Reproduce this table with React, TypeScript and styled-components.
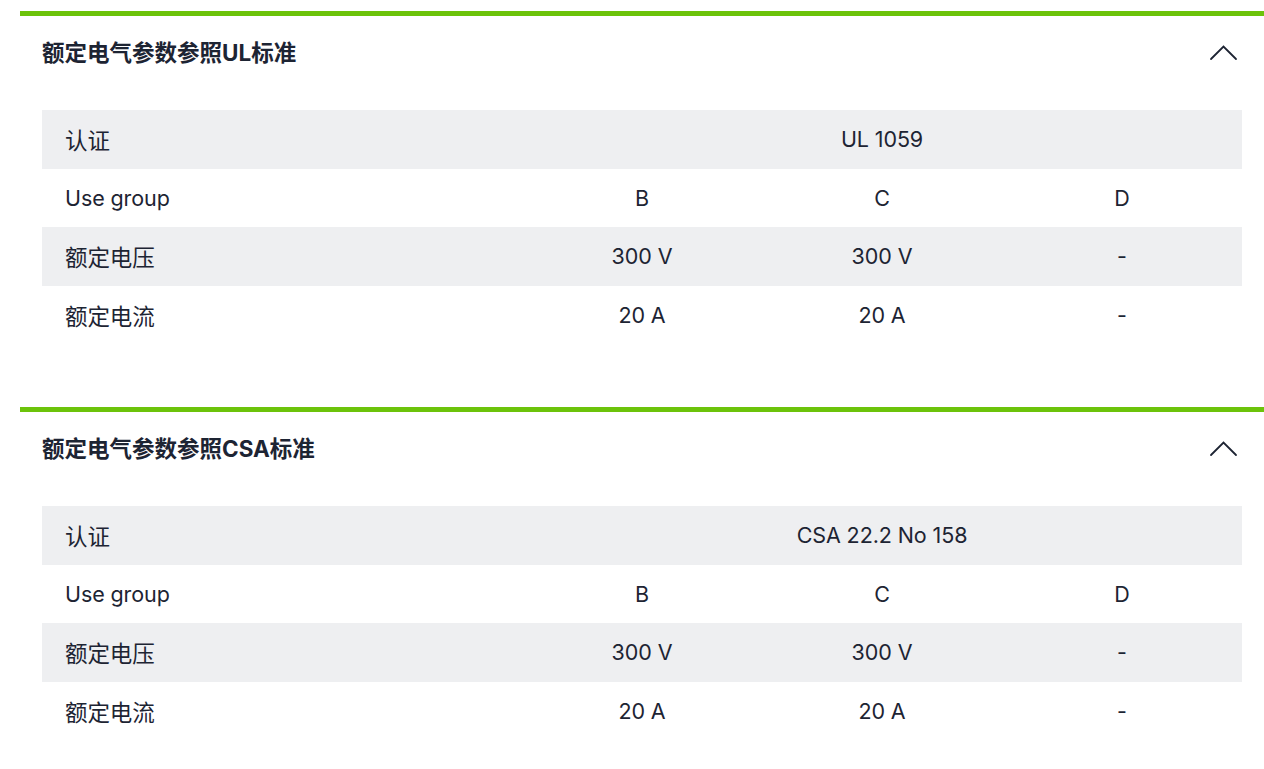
import React from "react";
import styled, { createGlobalStyle } from "styled-components";

const Global = createGlobalStyle`
  html, body { margin: 0; padding: 0; background: #fff; }
  body { font-family: Inter, "Noto Sans CJK SC", sans-serif; color: #1d2433; }
`;

const Page = styled.div`
  padding: 11px 0 0 20px;
`;

const Section = styled.section`
  border-top: 5px solid #6cc30a;
  padding: 0 22px;
  margin-bottom: 63px;
`;

const Header = styled.div`
  height: 72px;
  display: flex;
  align-items: center;
  justify-content: space-between;
`;

const Title = styled.h2`
  margin: 0;
  font-size: 22.5px;
  font-weight: 700;
  line-height: 1.2;
  color: #1d2433;
  font-family: Inter, "Noto Sans CJK SC", sans-serif;
`;

const Toggle = styled.button`
  border: 0;
  background: none;
  padding: 0;
  margin-right: 4px;
  width: 30px;
  height: 18px;
  display: flex;
  align-items: center;
  justify-content: center;
  cursor: pointer;
`;

const Table = styled.div`
  margin-top: 22px;
  display: grid;
  grid-template-columns: 480px repeat(3, 1fr);
`;

const Row = styled.div<{ $shade?: boolean }>`
  display: contents;
  & > div { background: ${(p) => (p.$shade ? "#eeeff1" : "#fff")}; }
`;

const Cell = styled.div<{ $span?: number; $label?: boolean; $cjk?: boolean }>`
  height: 58.5px;
  display: flex;
  align-items: center;
  justify-content: ${(p) => (p.$label ? "flex-start" : "center")};
  padding-left: ${(p) => (p.$label ? "23px" : "0")};
  grid-column: span ${(p) => p.$span ?? 1};
  font-size: ${(p) => (p.$cjk ? "22.5px" : "21.5px")};
  letter-spacing: -0.1px;
  color: #1d2433;
`;

const Chevron = () => (
  <svg width="30" height="18" viewBox="0 0 30 18">
    <path d="M3 16 L15.5 3.5 L28 16" fill="none" stroke="#1d2433" strokeWidth="1.8" strokeLinecap="round" strokeLinejoin="miter" />
  </svg>
);

type Spec = { title: string; cert: string };

const specs: Spec[] = [
  { title: "额定电气参数参照UL标准", cert: "UL 1059" },
  { title: "额定电气参数参照CSA标准", cert: "CSA 22.2 No 158" },
];

const rows: [string, string, string, string][] = [
  ["Use group", "B", "C", "D"],
  ["额定电压", "300 V", "300 V", "-"],
  ["额定电流", "20 A", "20 A", "-"],
];

const isCjk = (t: string) => /[\u4e00-\u9fff]/.test(t);

export default function App() {
  return (
    <>
      <Global />
      <Page>
        {specs.map((s) => (
          <Section key={s.title}>
            <Header>
              <Title>{s.title}</Title>
              <Toggle aria-label="collapse">
                <Chevron />
              </Toggle>
            </Header>
            <Table>
              <Row $shade>
                <Cell $label $cjk>认证</Cell>
                <Cell $span={3}>{s.cert}</Cell>
              </Row>
              {rows.map((r, i) => (
                <Row key={r[0]} $shade={i % 2 === 1}>
                  <Cell $label $cjk={isCjk(r[0])}>{r[0]}</Cell>
                  <Cell>{r[1]}</Cell>
                  <Cell>{r[2]}</Cell>
                  <Cell>{r[3]}</Cell>
                </Row>
              ))}
            </Table>
          </Section>
        ))}
      </Page>
    </>
  );
}
